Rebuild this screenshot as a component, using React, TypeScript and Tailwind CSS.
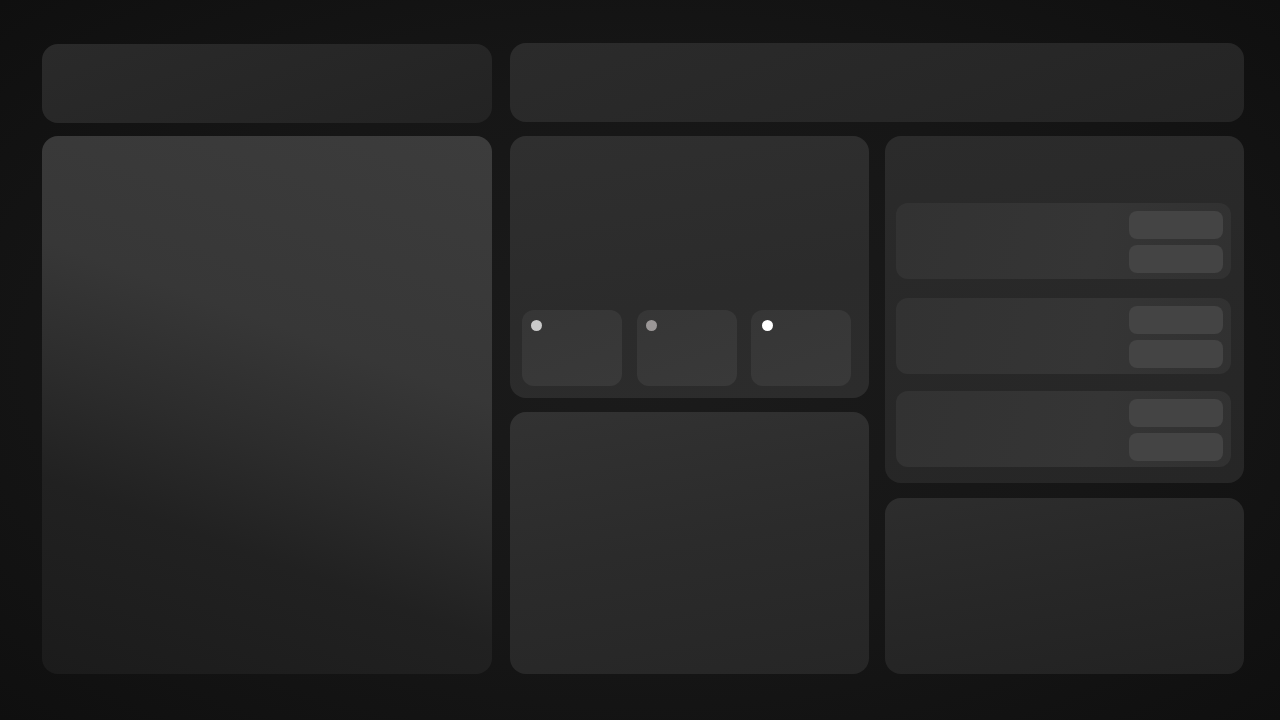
export default function App() {
  const dots = ['bg-[#c9c9c9]', 'bg-[#9b9797]', 'bg-white ml-[2px]'];

  return (
    <div className="min-h-screen w-full bg-[radial-gradient(ellipse_at_center,#1b1b1b_0%,#161616_55%,#0f0f0f_100%)] font-['Inter',sans-serif]">
      <div className="flex gap-[18px] pl-[42px] pt-[43px]">
        {/* Left column */}
        <div className="flex w-[450px] flex-col">
          <div className="mt-[1px] h-[79px] rounded-2xl bg-[linear-gradient(160deg,#2a2a2a_0%,#262626_60%,#232323_100%)]" />
          <div className="mt-[13px] h-[538px] rounded-2xl bg-[linear-gradient(200deg,#3c3c3c_0%,#373737_38%,#2c2c2c_56%,#212121_72%,#1b1b1b_100%)]" />
        </div>

        {/* Right area */}
        <div className="flex w-[734px] flex-col gap-[14px]">
          <div className="h-[79px] rounded-2xl bg-[linear-gradient(160deg,#2b2b2b_0%,#272727_60%,#242424_100%)]" />

          <div className="flex gap-[16px]">
            {/* Middle column */}
            <div className="flex w-[359px] flex-col gap-[14px]">
              <div className="flex h-[262px] flex-col justify-end rounded-2xl bg-[linear-gradient(170deg,#2f2f2f_0%,#2b2b2b_60%,#2c2c2c_100%)] pb-3 pl-3 pr-[18px]">
                <div className="flex justify-between">
                  {dots.map((d, i) => (
                    <div
                      key={i}
                      className="h-[76px] w-[100px] rounded-xl bg-[linear-gradient(160deg,#363636_0%,#393939_100%)] pl-[9px] pt-[10px]"
                    >
                      <div className={`h-[11px] w-[11px] rounded-full ${d}`} />
                    </div>
                  ))}
                </div>
              </div>
              <div className="h-[262px] rounded-2xl bg-[linear-gradient(170deg,#323232_0%,#2b2b2b_50%,#262626_100%)]" />
            </div>

            {/* Right column */}
            <div className="flex w-[359px] flex-col gap-[15px]">
              <div className="flex h-[347px] flex-col rounded-2xl bg-[linear-gradient(170deg,#2b2b2b_0%,#282828_50%,#262626_100%)] pl-[11px] pr-[13px] pt-[67px]">
                {[0, 1, 2].map((i) => (
                  <div
                    key={i}
                    className={`flex h-[76px] flex-col items-end gap-[6px] rounded-xl bg-[linear-gradient(100deg,#323232_0%,#353535_60%,#313131_100%)] pr-2 pt-2 ${
                      i === 1 ? 'mt-[19px]' : i === 2 ? 'mt-[17px]' : ''
                    }`}
                  >
                    <div className="h-7 w-[94px] rounded-lg bg-[#444444]" />
                    <div className="h-7 w-[94px] rounded-lg bg-[#444444]" />
                  </div>
                ))}
              </div>
              <div className="h-[176px] rounded-2xl bg-[linear-gradient(170deg,#2d2d2d_0%,#272727_50%,#222222_100%)]" />
            </div>
          </div>
        </div>
      </div>
    </div>
  );
}
